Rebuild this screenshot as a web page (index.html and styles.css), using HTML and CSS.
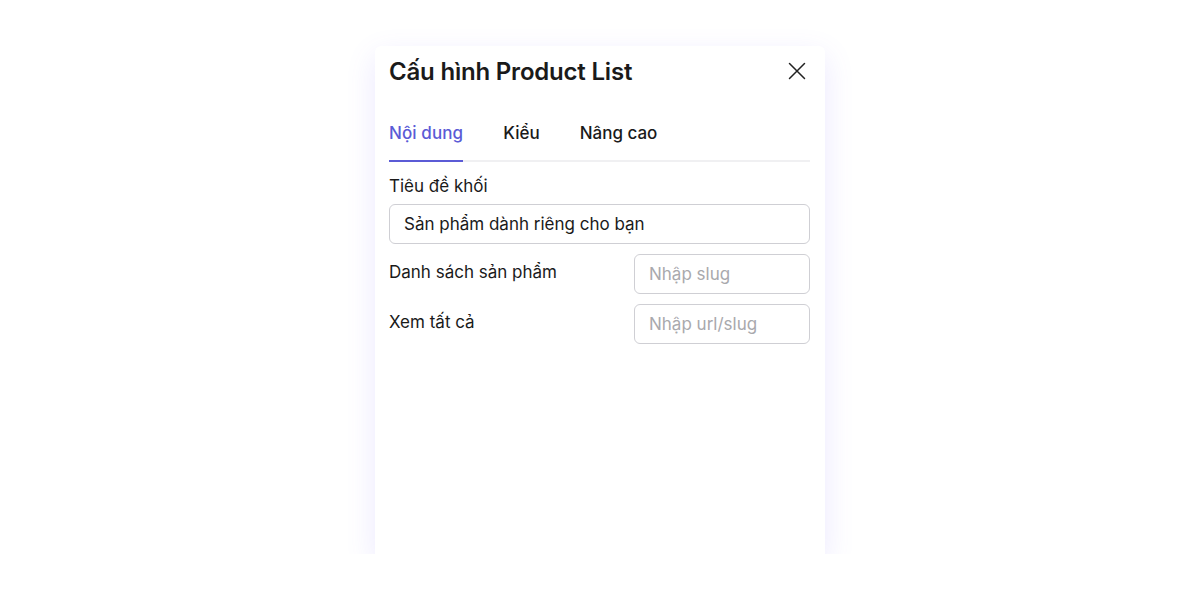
FILE: index.html
```html
<!DOCTYPE html>
<html lang="vi">
<head>
<meta charset="utf-8">
<title>Cấu hình Product List</title>
<link rel="stylesheet" href="styles.css">
</head>
<body>
<div class="stage">
  <div class="panel">
    <div class="header">
      <h1 class="title">Cấu hình Product List</h1>
      <button class="close" aria-label="Đóng">
        <svg width="18" height="18" viewBox="0 0 18 18"><path d="M1.5 1.5 L16.5 16.5 M16.5 1.5 L1.5 16.5" stroke="#222" stroke-width="1.5" stroke-linecap="round" fill="none"/></svg>
      </button>
    </div>
    <div class="tabs">
      <div class="tab active">Nội dung</div>
      <div class="tab">Kiểu</div>
      <div class="tab">Nâng cao</div>
    </div>
    <div class="form">
      <div class="field">
        <label class="label">Tiêu đề khối</label>
        <div class="input">Sản phẩm dành riêng cho bạn</div>
      </div>
      <div class="row">
        <label class="label">Danh sách sản phẩm</label>
        <div class="input small placeholder">Nhập slug</div>
      </div>
      <div class="row">
        <label class="label">Xem tất cả</label>
        <div class="input small placeholder">Nhập url/slug</div>
      </div>
    </div>
  </div>
</div>
</body>
</html>
```
FILE: styles.css
```css
* { box-sizing: border-box; }
html, body { margin: 0; padding: 0; background: #fff; }
body { font-family: Inter, "Noto Sans", sans-serif; color: #1d1d1f; }
.stage { display: flex; justify-content: center; padding-top: 46px; }
.panel {
  width: 450px;
  height: 508px;
  background: #fff;
  border-radius: 6px 6px 0 0;
  box-shadow: 0 10px 30px rgba(110, 90, 255, 0.14);
  padding: 0 15px 0 14px;
}
.header { display: flex; align-items: center; justify-content: space-between; height: 50px; }
.title { margin: 0; font-size: 24px; font-weight: 600; letter-spacing: -0.2px; color: #1a1a1a; }
.close { background: none; border: 0; padding: 0; margin-right: 4px; width: 18px; height: 18px; display: flex; }
.tabs { display: flex; gap: 40px; border-bottom: 2px solid #f0f0f2; margin-top: 26px; }
.tab { font-size: 17px; font-weight: 500; padding-bottom: 16px; margin-bottom: -2px; border-bottom: 2px solid transparent; color: #1a1a1a; line-height: 22px; }
.tab.active { color: #5b5bd6; border-bottom-color: #5b5bd6; letter-spacing: 0.1px; }
.form { display: flex; flex-direction: column; gap: 10px; padding-top: 13px; }
.field { display: flex; flex-direction: column; gap: 7px; }
.row { display: flex; justify-content: space-between; align-items: flex-start; }
.row .label { padding-top: 7px; }
.label { font-size: 17px; line-height: 22px; color: #1a1a1a; }
.input {
  height: 40px;
  border: 1px solid #cfcfd4;
  border-radius: 6px;
  padding: 0 14px;
  display: flex; align-items: center;
  font-size: 17px;
  color: #1a1a1a;
}
.input.small { width: 176px; }
.input.placeholder { color: #a9a9ad; }
```
